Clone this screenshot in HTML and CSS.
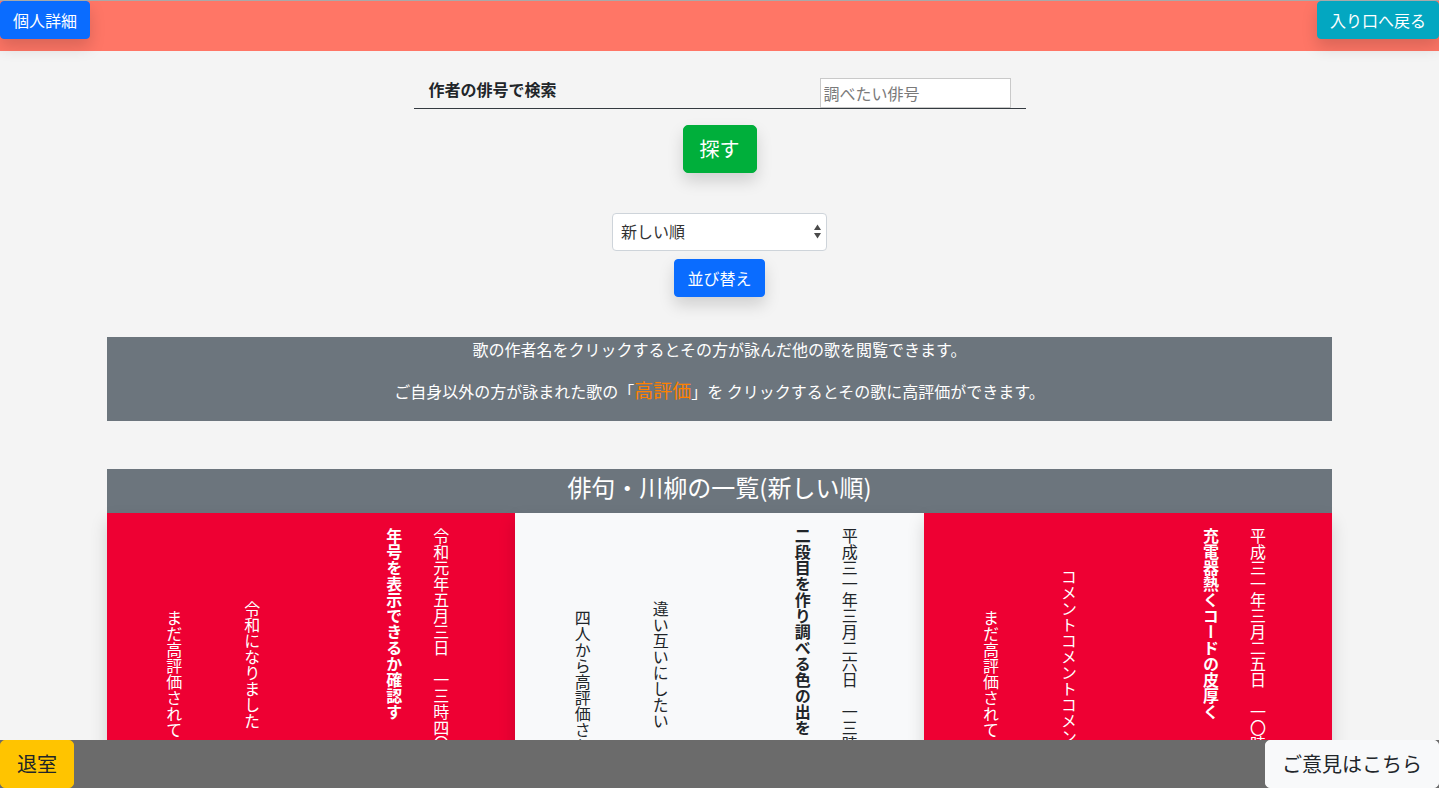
FILE: index.html
```html
<!DOCTYPE html>
<html lang="ja">
<head>
<meta charset="utf-8">
<title>俳句・川柳の一覧</title>
<link rel="stylesheet" href="styles.css">
</head>
<body>
<header class="topbar">
  <a class="btn btn-primary btn-raised" href="#">個人詳細</a>
  <a class="btn btn-info btn-raised" href="#">入り口へ戻る</a>
</header>

<main class="page">
  <form class="search">
    <div class="search-row">
      <label class="search-label" for="haigo">作者の俳号で検索</label>
      <input id="haigo" class="search-input" type="text" placeholder="調べたい俳号">
    </div>
    <button type="button" class="btn btn-lg btn-success btn-raised search-btn">探す</button>
  </form>

  <form class="sort">
    <div class="select-wrap">
      <select class="sort-select">
        <option>新しい順</option>
        <option>古い順</option>
      </select>
      <svg class="select-arrows" width="7" height="15" viewBox="0 0 7 15" aria-hidden="true">
        <polygon points="0,6 3.5,0.5 7,6" fill="#4a4a4a"/>
        <polygon points="0,9 7,9 3.5,14.5" fill="#4a4a4a"/>
      </svg>
    </div>
    <button type="button" class="btn btn-primary btn-raised">並び替え</button>
  </form>

  <section class="notice">
    <p class="notice-line">歌の作者名をクリックするとその方が詠んだ他の歌を閲覧できます。</p>
    <p class="notice-line notice-line-2">ご自身以外の方が詠まれた歌の「<span class="hl">高評価</span>」を クリックするとその歌に高評価ができます。</p>
  </section>

  <section class="list">
    <h2 class="list-title">俳句・川柳の一覧(新しい順)</h2>
    <div class="cards">
      <article class="card card-red">
        <p class="col col-date">令和元年五月三日　一三時四〇分</p>
        <p class="col col-poem">年号を表示できるか確認す</p>
        <p class="col col-comment">令和になりました</p>
        <p class="col col-likes">まだ高評価されていません</p>
      </article>
      <article class="card card-light">
        <p class="col col-date">平成三一年三月二六日　一三時二〇分</p>
        <p class="col col-poem">二段目を作り調べる色の出を</p>
        <p class="col col-comment">違い互いにしたい</p>
        <p class="col col-likes">四人から高評価されました</p>
      </article>
      <article class="card card-red">
        <p class="col col-date">平成三一年三月二五日　一〇時一五分</p>
        <p class="col col-poem">充電器熱くコードの皮厚く</p>
        <p class="col col-comment">コメントコメントコメント</p>
        <p class="col col-likes">まだ高評価されていません</p>
      </article>
    </div>
  </section>
</main>

<footer class="bottombar">
  <a class="btn btn-lg btn-warning" href="#">退室</a>
  <a class="btn btn-lg btn-light" href="#">ご意見はこちら</a>
</footer>
</body>
</html>
```

FILE: styles.css
```css
* {
  box-sizing: border-box;
}

html,
body {
  margin: 0;
}

body {
  background: #f4f4f4;
  color: #212529;
  font-family: "Noto Sans CJK JP", "Noto Sans", sans-serif;
  font-size: 16px;
  line-height: 1.5;
  border-top: 1px solid #a9a9a9;
}

/* buttons */
.btn {
  display: inline-block;
  font-family: inherit;
  font-size: 16px;
  line-height: 24px;
  padding: 6px 12px;
  border: 1px solid transparent;
  border-radius: 4px;
  color: #fff;
  text-decoration: none;
  white-space: nowrap;
  cursor: pointer;
}

.btn-lg {
  font-size: 20px;
  line-height: 30px;
  padding: 8px 16px;
  border-radius: 5px;
}

.btn-raised {
  box-shadow: 0 8px 16px rgba(0, 0, 0, 0.15);
}

.btn-primary {
  background: #0a6cff;
  border-color: #0a6cff;
}

.btn-info {
  background: #03a7c1;
  border-color: #03a7c1;
}

.btn-success {
  background: #00af3b;
  border-color: #00af3b;
}

.btn-warning {
  background: #ffc400;
  border-color: #ffc400;
  color: #212529;
}

.btn-light {
  background: #f8f9fa;
  border-color: #f8f9fa;
  color: #212529;
}

/* header */
.topbar {
  display: flex;
  justify-content: space-between;
  align-items: flex-start;
  height: 50px;
  background: #ff7666;
}

/* search */
.search {
  display: flex;
  flex-direction: column;
  align-items: center;
  padding-top: 27px;
  margin: 0;
}

.search-row {
  display: flex;
  justify-content: space-between;
  align-items: flex-start;
  width: 612px;
  height: 31px;
  padding: 0 15px;
  border-bottom: 1px solid #343a40;
}

.search-label {
  font-weight: bold;
  line-height: 24px;
  margin-top: -1px;
}

.search-input {
  width: 191px;
  height: 30px;
  margin: 0;
  padding: 0 3px;
  border: 1px solid #c9c9c9;
  background: #fff;
  font-family: inherit;
  font-size: 16px;
  color: #212529;
}

.search-input::placeholder {
  color: #7a7a7a;
}

.search-btn {
  margin-top: 16px;
}

/* sort */
.sort {
  display: flex;
  flex-direction: column;
  align-items: center;
  gap: 8px;
  margin: 40px 0 0;
}

.select-wrap {
  position: relative;
  width: 215px;
  height: 38px;
}

.sort-select {
  appearance: none;
  -webkit-appearance: none;
  width: 100%;
  height: 100%;
  margin: 0;
  padding: 0 24px 2px 8px;
  border: 1px solid #ced4da;
  border-radius: 4px;
  background: #fff;
  font-family: inherit;
  font-size: 16px;
  color: #333;
}

.select-arrows {
  position: absolute;
  right: 6px;
  top: 11px;
  pointer-events: none;
}

/* notice */
.notice {
  width: 1225px;
  margin: 40px auto 0;
  padding-bottom: 15px;
  background: #6c757d;
  color: #fff;
  text-align: center;
}

.notice-line {
  margin: 0;
  line-height: 24px;
}

.notice-line-2 {
  margin-top: 15px;
  line-height: 30px;
  height: 30px;
}

.hl {
  color: #ff8000;
  font-size: 19px;
  line-height: 1;
}

/* list */
.list {
  width: 1225px;
  margin: 48px auto 0;
}

.list-title {
  margin: 0;
  padding-bottom: 8px;
  background: #6c757d;
  color: #fff;
  font-size: 24px;
  font-weight: normal;
  line-height: 36px;
  text-align: center;
}

.cards {
  display: grid;
  grid-template-columns: repeat(3, 1fr);
}

.card {
  display: flex;
  flex-direction: row-reverse;
  align-items: flex-start;
  height: 275px;
  padding: 15px 62px 0 0;
  overflow: hidden;
  box-shadow: 0 8px 16px rgba(0, 0, 0, 0.15);
}

.card-red {
  background: #ee0033;
  color: #fff;
}

.card-light {
  background: #f8f9fa;
  color: #212529;
}

.col {
  flex: none;
  margin: 0;
  width: 24px;
  font-size: 16px;
  line-height: 24px;
  writing-mode: vertical-rl;
  white-space: nowrap;
}

.col-poem {
  margin-right: 23px;
  font-weight: bold;
}

.col-comment {
  margin-right: 118px;
  height: 274px;
  text-align: center;
}

.col-likes {
  margin-right: 54px;
  height: 356px;
  text-align: center;
}

/* footer */
.bottombar {
  position: fixed;
  left: 0;
  right: 0;
  bottom: 0;
  display: flex;
  justify-content: space-between;
  height: 48px;
  background: #6b6b6b;
}
```
